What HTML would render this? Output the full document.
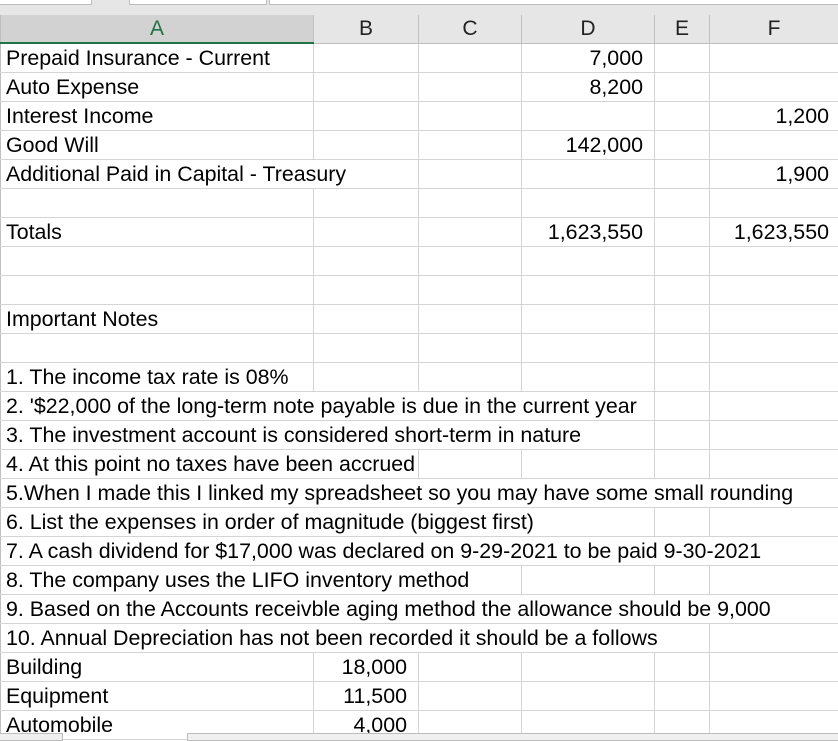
<!DOCTYPE html>
<html><head><meta charset="utf-8"><style>
body{margin:0;width:838px;height:737px;overflow:hidden;background:#fff;font-family:"Liberation Sans",Arial,sans-serif;position:relative}
.top{position:absolute;left:0;top:0;width:838px;height:15px;background:#e6e6e6}
.tab{position:absolute;top:-2px;height:5px;border:1px solid #bdbdbd;background:#fff}
table{position:absolute;left:0;top:15px;border-collapse:collapse;table-layout:fixed;width:838px}
td{height:28px;border:1px solid #d4d4d4;font-size:21.4px;color:#000;padding:0 0 0 5px;white-space:nowrap;overflow:hidden;line-height:28px}
tr.h td{height:27px;line-height:27px;background:#e6e6e6;text-align:center;border-color:#bfbfbf;border-top:none;color:#222;font-size:21px;padding:0}
tr.h td.sel{background:#d2d2d2;color:#217346;border-bottom:2px solid #217346}
td.r{text-align:right;padding-right:11px}
td:first-child{border-left:1px solid #bfbfbf}
.bot{position:absolute;top:733px;height:6px;border:1px solid #bdbdbd;background:#f0f0f0}
</style></head><body>
<div class="top"><div class="tab" style="left:-2px;width:92px"></div><div class="tab" style="left:129px;width:136px"></div><div class="tab" style="left:269px;width:569px"></div></div>
<table>
<colgroup><col style="width:313px"><col style="width:105px"><col style="width:103px"><col style="width:133px"><col style="width:55px"><col style="width:129px"></colgroup>
<tr class="h"><td class="sel">A</td><td>B</td><td>C</td><td>D</td><td>E</td><td>F</td></tr>
<tr><td>Prepaid Insurance - Current</td><td></td><td></td><td class="r">7,000</td><td></td><td></td></tr>
<tr><td>Auto Expense</td><td></td><td></td><td class="r">8,200</td><td></td><td></td></tr>
<tr><td>Interest Income</td><td></td><td></td><td></td><td></td><td class="r" style="padding-right:9px">1,200</td></tr>
<tr><td>Good Will</td><td></td><td></td><td class="r">142,000</td><td></td><td></td></tr>
<tr><td colspan="2">Additional Paid in Capital - Treasury</td><td></td><td></td><td></td><td class="r" style="padding-right:9px">1,900</td></tr>
<tr><td></td><td></td><td></td><td></td><td></td><td></td></tr>
<tr><td>Totals</td><td></td><td></td><td class="r">1,623,550</td><td></td><td class="r" style="padding-right:9px">1,623,550</td></tr>
<tr><td></td><td></td><td></td><td></td><td></td><td></td></tr>
<tr><td></td><td></td><td></td><td></td><td></td><td></td></tr>
<tr><td>Important Notes</td><td></td><td></td><td></td><td></td><td></td></tr>
<tr><td></td><td></td><td></td><td></td><td></td><td></td></tr>
<tr><td>1. The income tax rate is 08%</td><td></td><td></td><td></td><td></td><td></td></tr>
<tr><td colspan="4">2. '$22,000 of the long-term note payable is due in the current year</td><td></td><td></td></tr>
<tr><td colspan="4">3. The investment account is considered short-term in nature</td><td></td><td></td></tr>
<tr><td colspan="2">4. At this point no taxes have been accrued</td><td></td><td></td><td></td><td></td></tr>
<tr><td colspan="6">5.When I made this I linked my spreadsheet so you may have some small rounding</td></tr>
<tr><td colspan="4">6. List the expenses in order of magnitude (biggest first)</td><td></td><td></td></tr>
<tr><td colspan="6">7. A cash dividend for $17,000 was declared on 9-29-2021 to be paid 9-30-2021</td></tr>
<tr><td colspan="3">8. The company uses the LIFO inventory method</td><td></td><td></td><td></td></tr>
<tr><td colspan="6">9. Based on the Accounts receivble aging method the allowance should be 9,000</td></tr>
<tr><td colspan="5">10. Annual Depreciation has not been recorded it should be a follows</td><td></td></tr>
<tr><td>Building</td><td class="r">18,000</td><td></td><td></td><td></td><td></td></tr>
<tr><td>Equipment</td><td class="r">11,500</td><td></td><td></td><td></td><td></td></tr>
<tr><td>Automobile</td><td class="r">4,000</td><td></td><td></td><td></td><td></td></tr>
</table>
<div class="bot" style="left:-2px;width:63px"></div><div class="bot" style="left:187px;width:651px"></div>
</body></html>
